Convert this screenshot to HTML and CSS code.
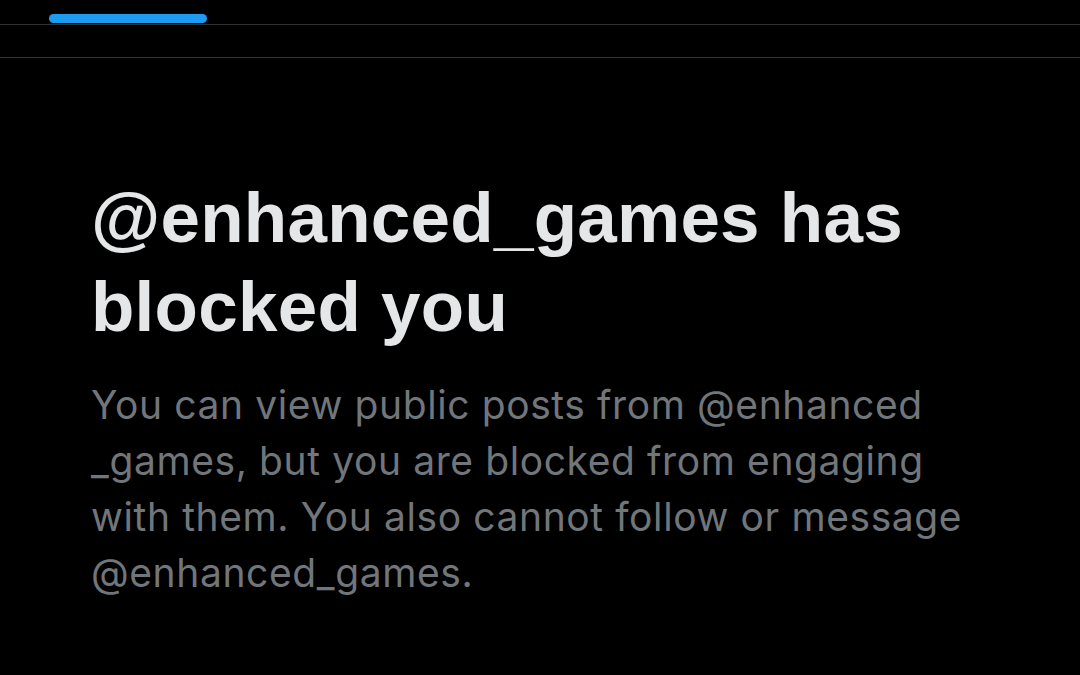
FILE: index.html
```html
<!DOCTYPE html>
<html lang="en">
<head>
<meta charset="utf-8">
<link rel="stylesheet" href="styles.css">
</head>
<body>
  <div class="tabs">
    <div class="indicator"></div>
  </div>
  <div class="strip"></div>
  <main class="notice">
    <h1 class="title">@enhanced_games has blocked you</h1>
    <p class="desc">You can view public posts from @enhanced<wbr>_games, but you are blocked from engaging with them. You also cannot follow or message @enhanced_games.</p>
  </main>
</body>
</html>
```

FILE: styles.css
```css
html, body {
  margin: 0;
  padding: 0;
  background: #000;
  height: 100%;
  overflow: hidden;
}
.tabs {
  height: 24px;
  border-bottom: 1px solid #2f3336;
  display: flex;
  align-items: flex-start;
}
.indicator {
  margin-top: 14px;
  margin-left: 49px;
  width: 158px;
  height: 9px;
  border-radius: 5px;
  background: #1d9bf0;
}
.strip {
  height: 32px;
  border-bottom: 1px solid #2f3336;
}
.notice {
  padding: 0 0 0 91px;
  margin-top: 115px;
}
.title {
  margin: 0;
  font-family: "Liberation Sans", Arial, sans-serif;
  font-weight: 700;
  font-size: 71px;
  letter-spacing: 0.25px;
  line-height: 89px;
  color: #e4e6e7;
  width: 900px;
}
.desc {
  margin: 26px 0 0 0;
  font-family: "Inter", sans-serif;
  font-size: 39px;
  letter-spacing: 0.6px;
  line-height: 56px;
  color: #71767b;
  width: 900px;
}
```
